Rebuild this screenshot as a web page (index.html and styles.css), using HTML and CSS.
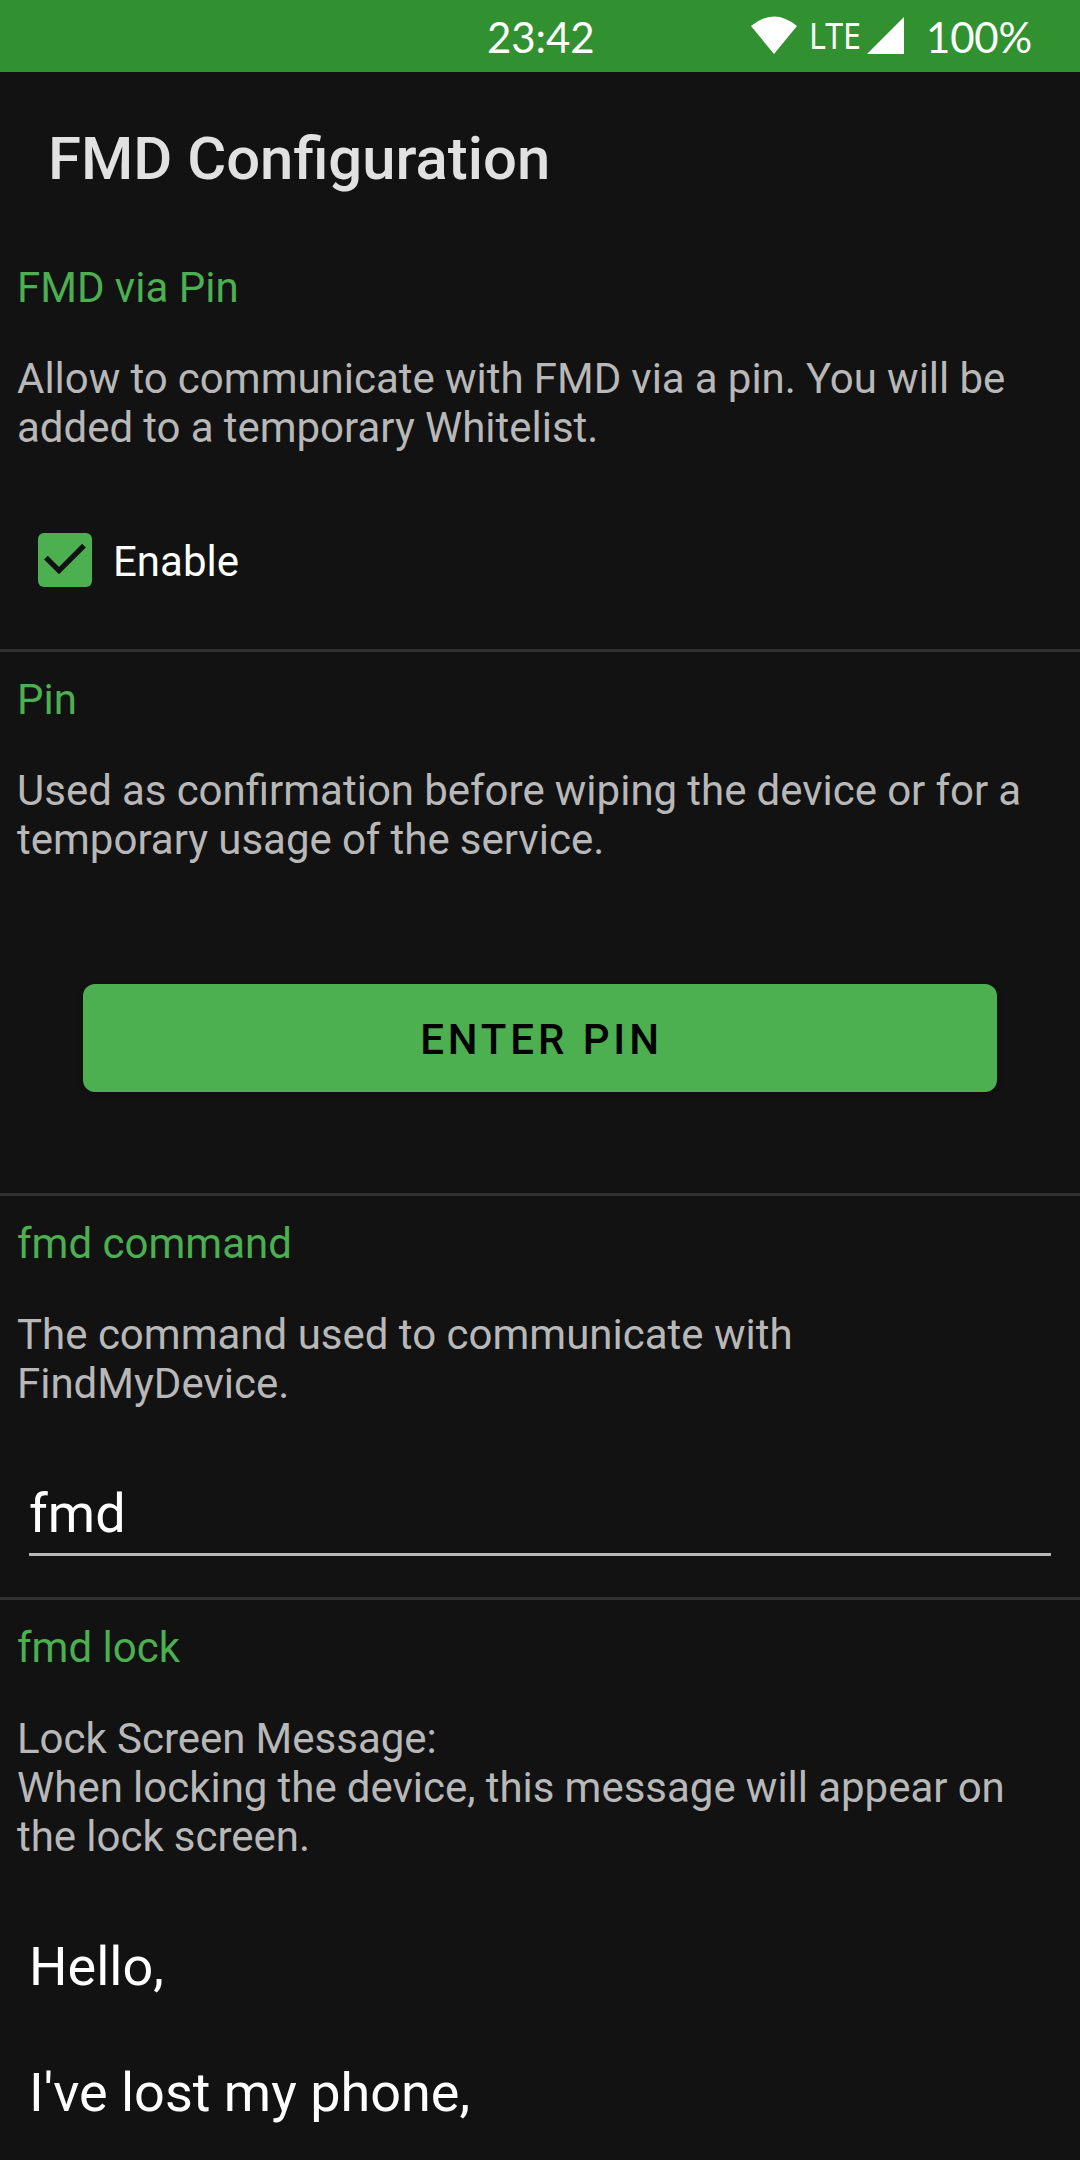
FILE: index.html
```html
<!DOCTYPE html>
<html lang="en">
<head>
<meta charset="utf-8">
<title>FMD Configuration</title>
<link rel="stylesheet" href="styles.css">
</head>
<body>
<header class="status">
<span class="clock">23:42</span>
<svg class="wifi" viewBox="0 0 46 38"><path d="M0 10Q23-9 46 10L23 38Z"/></svg>
<span class="lte">LTE</span>
<svg class="signal" viewBox="0 0 37 37"><path d="M37 0V37H0Z"/></svg>
<span class="battery">100%</span>
</header>
<h1 class="title">FMD Configuration</h1>
<main>
<section class="section via">
<h2 class="heading">FMD via Pin</h2>
<p class="text">Allow to communicate with FMD via a pin. You will be<br>added to a temporary Whitelist.</p>
<div class="check"><svg class="box" viewBox="0 0 54 54"><rect width="54" height="54" rx="6"/><path d="M7.9 24.6L21 37.6L46 12.6"/></svg><span>Enable</span></div>
</section>
<section class="section pin">
<h2 class="heading">Pin</h2>
<p class="text">Used as confirmation before wiping the device or for a<br>temporary usage of the service.</p>
<button class="button">ENTER PIN</button>
</section>
<section class="section command">
<h2 class="heading">fmd command</h2>
<p class="text">The command used to communicate with<br>FindMyDevice.</p>
<div class="field">fmd</div>
</section>
<section class="section lock">
<h2 class="heading">fmd lock</h2>
<p class="text">Lock Screen Message:<br>When locking the device, this message will appear on<br>the lock screen.</p>
<div class="message">Hello,<br><br>I've lost my phone,</div>
</section>
</main>
</body>
</html>
```
FILE: styles.css
```css
* { box-sizing: border-box; }
body { margin: 0; height: 2160px; overflow: hidden; background: #121212; color: #fff; font-family: Roboto, sans-serif; }
.status { height: 72px; background: #319131; display: flex; align-items: center; padding-left: 487px; font: 42px/50px Lato, sans-serif; }
.clock { width: 264px; margin-top: 2px; letter-spacing: -0.1px; }
.wifi { width: 46px; height: 38px; margin-bottom: 2px; fill: #fff; }
.lte { font: 37px/51px "Noto Sans", sans-serif; margin: 0 0 3px 12px; width: 58px; transform: scaleX(0.87); transform-origin: left; }
.signal { width: 37px; height: 37px; margin-bottom: 1px; fill: #fff; }
.battery { margin: 2px 0 0 22px; letter-spacing: -0.2px; }
.title { margin: 0; height: 168px; padding: 52px 0 0 48px; font-size: 59.8px; line-height: 71px; font-weight: 500; color: #e1e1e1; }
.section { border-bottom: 3px solid #303030; padding: 23px 17px 0; }
.heading { margin: 0; font-size: 42px; line-height: 49px; font-weight: 400; color: #4caf50; }
.text { margin: 42px 0 0; font-size: 42px; line-height: 49px; word-spacing: -0.3px; color: #b8b8b8; }
.via { height: 412px; }
.pin { height: 544px; }
.command { height: 404px; }
.command .text { word-spacing: 0; }
.lock { height: 600px; }
.check { display: flex; align-items: flex-start; margin: 81px 0 0 21px; gap: 21px; font-size: 42px; line-height: 58px; }
.box { width: 54px; height: 54px; fill: #4caf50; }
.box path { fill: none; stroke: #121212; stroke-width: 5.2; }
.button { display: block; width: 914px; height: 108px; margin: 120px 0 0 66px; padding: 3px 0 0 3px; border: 0; border-radius: 12px; background: #4caf50; color: #000; font: 500 42px/49px Roboto, sans-serif; letter-spacing: 3.9px; box-shadow: 0 3px 6px rgba(0, 0, 0, 0.2); }
.field { margin: 69px 12px 0; height: 79px; border-bottom: 3px solid #b8b8b8; font-size: 54px; line-height: 73px; }
.message { margin: 74px 12px 0; font-size: 54px; line-height: 63px; }
```
